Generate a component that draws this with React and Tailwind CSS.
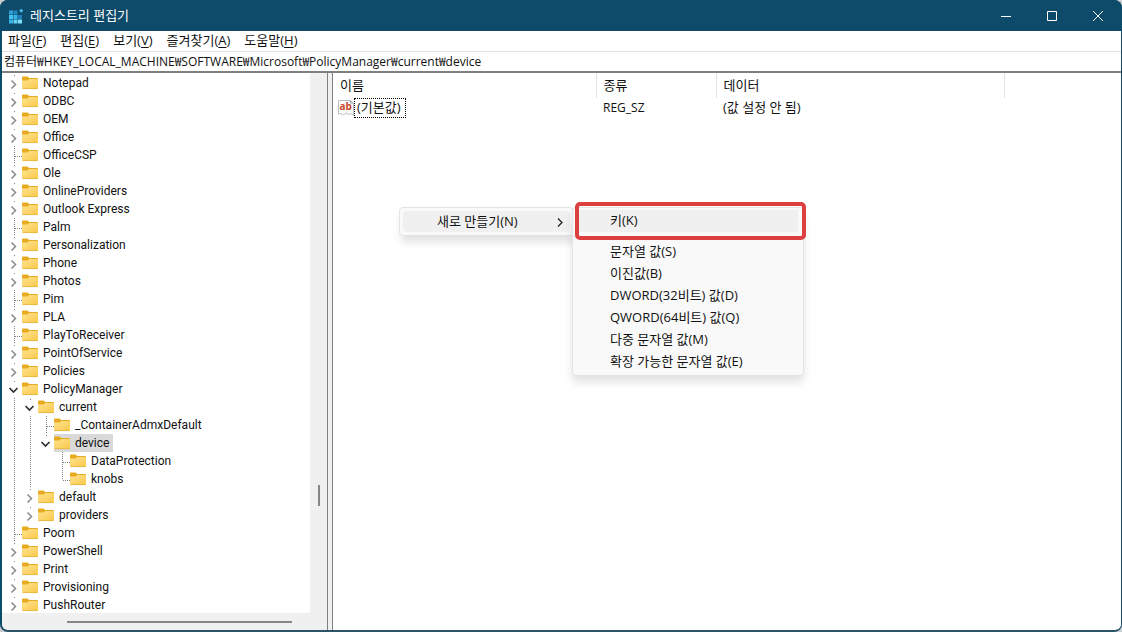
import { clsx } from 'clsx';

const menuItems = [
  { label: '파일', hotkey: 'F' },
  { label: '편집', hotkey: 'E' },
  { label: '보기', hotkey: 'V' },
  { label: '즐겨찾기', hotkey: 'A' },
  { label: '도움말', hotkey: 'H' },
];

const tree = [
  { name: 'Notepad', closed: true },
  { name: 'ODBC', closed: true },
  { name: 'OEM', closed: true },
  { name: 'Office', closed: true },
  { name: 'OfficeCSP' },
  { name: 'Ole', closed: true },
  { name: 'OnlineProviders', closed: true },
  { name: 'Outlook Express', closed: true },
  { name: 'Palm' },
  { name: 'Personalization', closed: true },
  { name: 'Phone', closed: true },
  { name: 'Photos', closed: true },
  { name: 'Pim' },
  { name: 'PLA', closed: true },
  { name: 'PlayToReceiver' },
  { name: 'PointOfService', closed: true },
  { name: 'Policies', closed: true },
  {
    name: 'PolicyManager',
    children: [
      {
        name: 'current',
        children: [
          { name: '_ContainerAdmxDefault' },
          {
            name: 'device',
            selected: true,
            children: [{ name: 'DataProtection' }, { name: 'knobs' }],
          },
        ],
      },
      { name: 'default', closed: true },
      { name: 'providers', closed: true },
    ],
  },
  { name: 'Poom' },
  { name: 'PowerShell', closed: true },
  { name: 'Print', closed: true },
  { name: 'Provisioning', closed: true },
  { name: 'PushRouter', closed: true },
];

const newValueItems = [
  '문자열 값(S)',
  '이진값(B)',
  'DWORD(32비트) 값(D)',
  'QWORD(64비트) 값(Q)',
  '다중 문자열 값(M)',
  '확장 가능한 문자열 값(E)',
];

const AppIcon = () => (
  <svg className="h-4 w-4 shrink-0" viewBox="0 0 16 16" aria-hidden="true">
    <path d="M1 2.500h4v4H1z" fill="#2d9fd8" />
    <path d="M5.500 2.500h4v4h-4z" fill="#2288c4" />
    <path d="M1 7h4v4H1z" fill="#45c1f0" />
    <path d="M5.500 7h4v4h-4z" fill="#35b5ea" />
    <path d="M10 7h4v4h-4z" fill="#1f7db8" />
    <path d="M1 11.500h4v4H1z" fill="#35b5ea" />
    <path d="M5.500 11.500h4v4h-4z" fill="#63d4f8" />
    <path d="M10 11.500h4v4h-4z" fill="#7be0fb" />
    <path d="M13 .8l2.200 1.700-1.700 2.200-2.200-1.700z" fill="#4cc5f0" />
  </svg>
);

const FolderIcon = () => (
  <svg className="h-4 w-4 shrink-0" viewBox="0 0 16 16" aria-hidden="true">
    <defs>
      <linearGradient id="folder" x1="0" y1="0" x2="1" y2="1">
        <stop offset="0" stopColor="#ffe391" />
        <stop offset="1" stopColor="#f8c94a" />
      </linearGradient>
    </defs>
    <path d="M0 2.500a1 1 0 0 1 1-1h4.600l1.600 1.600H15a1 1 0 0 1 1 1V8H0z" fill="#e6ab21" />
    <path d="M0 5.500h5.600l1.600-1.600H15a1 1 0 0 1 1 1V13a1 1 0 0 1-1 1H1a1 1 0 0 1-1-1z" fill="url(#folder)" />
    <path d="M.5 13.600h15" stroke="#e2b23c" strokeWidth="0.800" />
  </svg>
);

const StringIcon = () => (
  <svg className="h-4 w-4 shrink-0" viewBox="0 0 16 16" aria-hidden="true">
    <path
      d="M.5 .5h12l3 2.500v12.500l-2.500-2-2.500 1-2.500-1.500-2.500 2-2.500-1.500-2.500.5z"
      fill="#fbfbfb"
      stroke="#b9bec4"
    />
    <path d="M12.500 .5v2.500h3" fill="none" stroke="#9aa1a8" />
    <text x="1.500" y="10" className="fill-[#c8472b] font-['Open_Sans'] text-[10px] font-bold">
      ab
    </text>
  </svg>
);

// One 16px column of the tree's dotted connector lines
const Guide = ({ kind, last }) => (
  <svg className="h-[18px] w-4 shrink-0" viewBox="0 0 16 18" fill="none" aria-hidden="true">
    {kind === 'line' && <path d="M8.500 0v18" stroke="#808080" strokeDasharray="1 1" />}
    {kind === 'leaf' && (
      <>
        <path d={last ? 'M8.500 0v10' : 'M8.500 0v18'} stroke="#808080" strokeDasharray="1 1" />
        <path d="M9 10.500h7" stroke="#808080" strokeDasharray="1 1" />
      </>
    )}
    {kind === 'closed' && (
      <>
        <path d="M8.500 1v1" stroke="#808080" />
        <path d="M5.500 6.500l4 4-4 4" stroke="#8a8a8a" strokeWidth="1.500" />
      </>
    )}
    {kind === 'open' && (
      <>
        <path d="M8.500 1v1" stroke="#808080" />
        <path d="M3.500 8l4 4 4-4" stroke="#303030" strokeWidth="1.700" />
      </>
    )}
  </svg>
);

const TreeNode = ({ node, guides, last }) => {
  const kind = node.children ? 'open' : node.closed ? 'closed' : 'leaf';

  return (
    <li role="treeitem" aria-expanded={node.children ? true : undefined} aria-selected={!!node.selected}>
      <div className="flex h-[18px]">
        {guides.map((on, i) => (
          <Guide key={i} kind={on ? 'line' : 'none'} />
        ))}
        <Guide kind={kind} last={last} />
        <button
          type="button"
          className={clsx(
            'flex items-center gap-[5px] whitespace-nowrap pr-1 text-left leading-[18px]',
            node.selected && 'bg-[#d9d9d9]'
          )}
        >
          <FolderIcon />
          <span>{node.name}</span>
        </button>
      </div>
      {node.children && (
        <ul role="group">
          {node.children.map((child, i) => (
            <TreeNode
              key={child.name}
              node={child}
              guides={[...guides, !last]}
              last={i === node.children.length - 1}
            />
          ))}
        </ul>
      )}
    </li>
  );
};

const TitleBar = () => (
  <header className="flex h-[31px] shrink-0 items-center bg-[#0e4a69] pr-px pl-2 text-white">
    <AppIcon />
    <h1 className="ml-1.5 flex-1 pb-0.5 leading-4">레지스트리 편집기</h1>
    <div className="flex h-full">
      <button type="button" aria-label="최소화" className="flex w-[46px] items-center justify-center">
        <svg className="h-3 w-3" viewBox="0 0 12 12" fill="none" stroke="#fff">
          <path d="M1 6.500h10" />
        </svg>
      </button>
      <button type="button" aria-label="최대화" className="flex w-[46px] items-center justify-center">
        <svg className="h-3 w-3" viewBox="0 0 12 12" fill="none" stroke="#fff">
          <path d="M1.500 1.500h9v9h-9z" />
        </svg>
      </button>
      <button type="button" aria-label="닫기" className="flex w-[46px] items-center justify-center">
        <svg className="h-3 w-3" viewBox="0 0 12 12" fill="none" stroke="#fff">
          <path d="M1 1l10 10M11 1L1 11" />
        </svg>
      </button>
    </div>
  </header>
);

const MenuBar = () => (
  <nav className="flex h-5 shrink-0 items-center gap-[14px] bg-white px-1.5 pb-0.5">
    {menuItems.map((item) => (
      <button key={item.label} type="button" className="leading-4">
        {item.label}(<span className="underline underline-offset-2">{item.hotkey}</span>)
      </button>
    ))}
  </nav>
);

const ContextMenu = () => (
  <div className="absolute top-[134px] left-[66px] flex">
    <div
      role="menu"
      className="h-[29px] w-[175px] rounded border border-[#e4e4e4] bg-[#f9f9f9] p-[3px] shadow-[2px_6px_8px_rgba(0,0,0,0.12)]"
    >
      <button
        type="button"
        role="menuitem"
        className="flex h-full w-full items-center justify-between rounded bg-[#f0f0f0] pr-1.5 pl-[34px]"
      >
        <span className="pb-0.5">새로 만들기(N)</span>
        <svg className="h-3 w-2" viewBox="0 0 8 12" fill="none" stroke="#222" strokeWidth="1.300">
          <path d="M2 2.500l4 4-4 4" />
        </svg>
      </button>
    </div>
    <div
      role="menu"
      className="-ml-0.5 w-[232px] rounded border border-[#e4e4e4] bg-[#f9f9f9] py-0.5 shadow-[0_6px_8px_rgba(0,0,0,0.12)]"
    >
      <div className="relative">
        <button
          type="button"
          role="menuitem"
          className="ml-1 flex h-[22px] w-[221px] items-center bg-[#f0f0f0] pb-0.5 pl-[33px]"
        >
          키(K)
        </button>
        <div className="pointer-events-none absolute -top-2 -right-[3px] -bottom-2 left-0.5 rounded-[5px] border-4 border-[#dc3f3f]" />
      </div>
      <div className="mt-1 mb-1 h-px bg-[#e4e4e4]" />
      {newValueItems.map((label) => (
        <button
          key={label}
          type="button"
          role="menuitem"
          className="flex h-[22px] w-full items-center pb-0.5 pl-[37px]"
        >
          {label}
        </button>
      ))}
    </div>
  </div>
);

const ValueList = () => (
  <section className="relative min-w-0 flex-1 border-l border-[#808080] bg-white">
    <table className="w-full table-fixed text-left">
      <thead>
        <tr className="h-[25px]">
          <th className="w-[263px] border-r border-[#e2e2e2] pb-0.5 pl-[7px] font-normal">이름</th>
          <th className="w-[120px] border-r border-[#e2e2e2] pb-0.5 pl-[7px] font-normal">종류</th>
          <th className="w-[288px] border-r border-[#e2e2e2] pb-0.5 pl-[7px] font-normal">데이터</th>
          <td />
        </tr>
      </thead>
      <tbody>
        <tr className="h-5">
          <td>
            <div className="flex items-center pl-[5px]">
              <StringIcon />
              <span className="border border-dotted border-black pr-1 pb-0.5 pl-0.5 leading-4">(기본값)</span>
            </div>
          </td>
          <td className="pl-[7px] text-xs">REG_SZ</td>
          <td className="pb-0.5 pl-[7px]">(값 설정 안 됨)</td>
          <td />
        </tr>
      </tbody>
    </table>
    <ContextMenu />
  </section>
);

const KeyTree = () => (
  <aside className="grid w-[326px] shrink-0 grid-cols-[1fr_17px] grid-rows-[1fr_17px] border-r border-[#808080] bg-[#f0f0f0]">
    <ul role="tree" className="min-h-0 overflow-hidden bg-white pt-px pl-1 font-['Roboto',sans-serif] text-xs">
      {tree.map((node) => (
        <TreeNode key={node.name} node={node} guides={[]} last={false} />
      ))}
    </ul>
    <div className="flex flex-col items-center">
      <div className="flex-[411]" />
      <div className="h-[21px] w-0.5 bg-[#868686]" />
      <div className="flex-[107]" />
    </div>
    <div className="flex items-center pl-[65px]">
      <div className="h-0.5 w-[225px] bg-[#868686]" />
    </div>
  </aside>
);

export default function App() {
  return (
    <div className="h-screen bg-[#c9cdd0] font-['Open_Sans','Noto_Sans_CJK_KR',sans-serif] text-[13px] leading-4 text-[#111]">
      <div className="flex h-full flex-col overflow-hidden rounded-lg border-b-2 border-[#2b5468] bg-[#0e4a69]">
        <TitleBar />
        <div className="mr-px ml-0.5 flex min-h-0 flex-1 flex-col overflow-hidden rounded-b-md">
          <MenuBar />
          <input
            type="text"
            aria-label="주소"
            readOnly
            value="컴퓨터₩HKEY_LOCAL_MACHINE₩SOFTWARE₩Microsoft₩PolicyManager₩current₩device"
            className="h-5 shrink-0 border-t border-[#e0e0e0] bg-white px-0.5 pb-0.5 text-xs outline-none"
          />
          <main className="flex min-h-0 flex-1 border-t-2 border-[#808080] bg-[#f0f0f0]">
            <KeyTree />
            <div className="w-1 shrink-0 bg-[#f0f0f0]" />
            <ValueList />
          </main>
        </div>
      </div>
    </div>
  );
}
